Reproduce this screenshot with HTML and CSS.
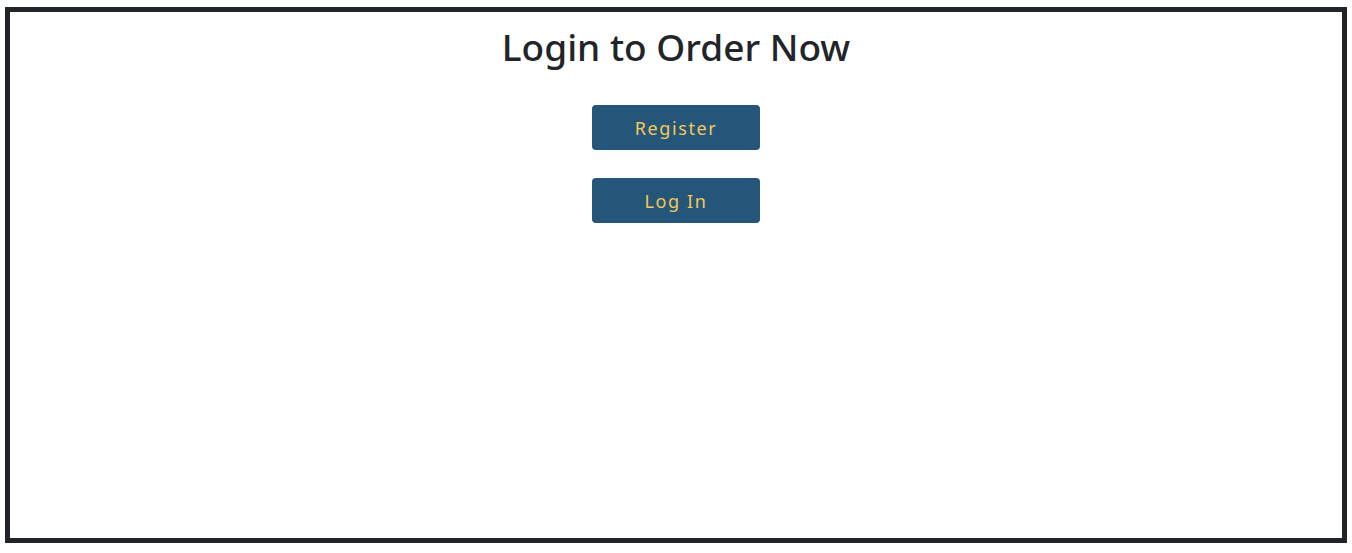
FILE: index.html
```html
<!DOCTYPE html>
<html lang="en">
<head>
<meta charset="utf-8">
<title>Login to Order Now</title>
<link rel="stylesheet" href="styles.css">
</head>
<body>
<main class="frame">
  <h1 class="title">Login to Order Now</h1>
  <div class="actions">
    <button class="btn" type="button">Register</button>
    <button class="btn" type="button">Log In</button>
  </div>
</main>
</body>
</html>
```

FILE: styles.css
```css
html, body {
  margin: 0;
  padding: 0;
  background: #ffffff;
}
body {
  padding: 7px 5px 0 5px;
  font-family: "Noto Sans", "Open Sans", sans-serif;
  color: #212529;
}
.frame {
  box-sizing: border-box;
  height: 536px;
  border: 5px solid #212529;
  display: flex;
  flex-direction: column;
  align-items: center;
}
.title {
  margin: 14px 0 0 0;
  font-size: 37px;
  font-weight: 500;
  line-height: 42px;
  color: #212529;
}
.actions {
  margin-top: 37px;
  display: flex;
  flex-direction: column;
  gap: 28px;
}
.btn {
  width: 168px;
  height: 45px;
  border: none;
  border-radius: 4px;
  background: #245679;
  color: #f3c85a;
  font-family: "Noto Sans", "Open Sans", sans-serif;
  font-size: 18px;
  letter-spacing: 1.6px;
  cursor: pointer;
}
```
